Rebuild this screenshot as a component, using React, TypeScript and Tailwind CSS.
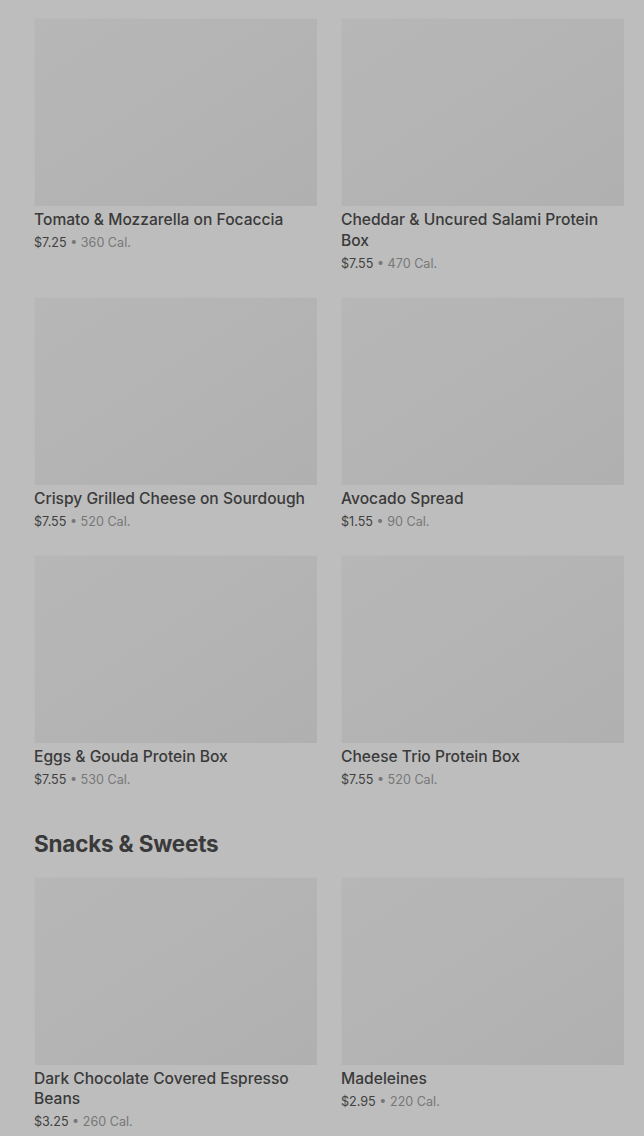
import React from "react";

type Item = { name: string; price: string; cal: string };

const rows1: Item[] = [
  { name: "Tomato & Mozzarella on Focaccia", price: "$7.25", cal: "360 Cal." },
  { name: "Cheddar & Uncured Salami Protein Box", price: "$7.55", cal: "470 Cal." },
  { name: "Crispy Grilled Cheese on Sourdough", price: "$7.55", cal: "520 Cal." },
  { name: "Avocado Spread", price: "$1.55", cal: "90 Cal." },
  { name: "Eggs & Gouda Protein Box", price: "$7.55", cal: "530 Cal." },
  { name: "Cheese Trio Protein Box", price: "$7.55", cal: "520 Cal." },
];

const rows2: Item[] = [
  { name: "Dark Chocolate Covered Espresso Beans", price: "$3.25", cal: "260 Cal." },
  { name: "Madeleines", price: "$2.95", cal: "220 Cal." },
];

function Card({ item }: { item: Item }) {
  return (
    <div className="flex flex-col">
      <div className="h-[188px] w-full bg-gradient-to-br from-[#b7b7b7] to-[#b0b0b0] border-t border-l border-[#bababa]" />
      <div className="mt-[4px] text-[15.6px] leading-[20.5px] font-medium text-[#3a3a3a]">{item.name}</div>
      <div className="mt-[3.5px] text-[12.6px] leading-[18px] text-[#404040]">
        {item.price} <span className="text-[#777777]">• {item.cal}</span>
      </div>
    </div>
  );
}

export default function App() {
  return (
    <div
      className="w-[644px] h-[1136px] overflow-hidden bg-[#bdbdbd] pl-[34px] pr-[20px] pt-[18px]"
      style={{ fontFamily: "Inter, 'Noto Sans', sans-serif" }}
    >
      <div className="grid grid-cols-2 gap-x-[24px] gap-y-[24px]">
        {rows1.map((it) => (
          <Card key={it.name} item={it} />
        ))}
      </div>
      <h2 className="mt-[39px] mb-[17px] text-[22.5px] leading-[32px] font-bold text-[#3a3a3a] tracking-[-0.2px]">
        Snacks &amp; Sweets
      </h2>
      <div className="grid grid-cols-2 gap-x-[24px] gap-y-[24px]">
        {rows2.map((it) => (
          <Card key={it.name} item={it} />
        ))}
      </div>
    </div>
  );
}
